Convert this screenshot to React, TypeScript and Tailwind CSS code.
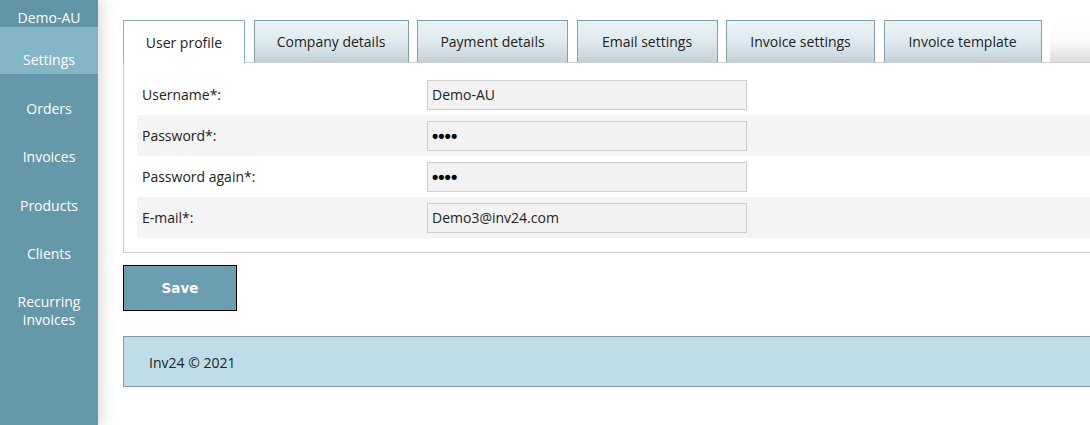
import React from "react";

const tabs = [
  { label: "User profile", w: "w-[122px]", active: true },
  { label: "Company details", w: "w-[155px]" },
  { label: "Payment details", w: "w-[151px]" },
  { label: "Email settings", w: "w-[141px]" },
  { label: "Invoice settings", w: "w-[149px]" },
  { label: "Invoice template", w: "w-[158px]" },
];

const rows = [
  { label: "Username*:", value: "Demo-AU", shade: false },
  { label: "Password*:", value: "••••", shade: true, pw: true },
  { label: "Password again*:", value: "••••", shade: false, pw: true },
  { label: "E-mail*:", value: "Demo3@inv24.com", shade: true },
];

const nav = ["Orders", "Invoices", "Products", "Clients"];

export default function App() {
  return (
    <div
      className="w-[1090px] h-[425px] flex bg-white overflow-hidden text-[#222]"
      style={{ fontFamily: '"Open Sans", "Noto Sans", sans-serif' }}
    >
      <aside className="w-[98px] shrink-0 bg-[#6599aa] text-white text-[14px] leading-[19px] text-center relative z-10 shadow-[5px_0_12px_rgba(0,0,0,0.13)]">
        <div className="h-[27px] bg-[#6194a5] pt-[8px]">Demo-AU</div>
        <div className="h-[47px] bg-[#84b6c7] pt-[23px]">Settings</div>
        <div className="flex flex-col pt-[10px]">
          {nav.map((n) => (
            <div key={n} className="h-[48.5px] flex items-center justify-center">
              {n}
            </div>
          ))}
          <div className="pt-[15px] leading-[18px]">
            Recurring
            <br />
            invoices
          </div>
        </div>
      </aside>

      <main className="flex-1 pl-[25px] pt-[20px] overflow-hidden">
        <div className="w-[1000px]">
          <div className="flex items-end gap-[8.5px] h-[42px] relative">
            {tabs.map((t) =>
              t.active ? (
                <div
                  key={t.label}
                  className={`${t.w} h-[43px] -mb-px relative z-10 bg-white border border-b-0 border-[#8fb0ba] flex items-center justify-center text-[14px]`}
                >
                  {t.label}
                </div>
              ) : (
                <div
                  key={t.label}
                  className={`${t.w} h-[42px] border border-b-0 border-[#7f9fa9] bg-gradient-to-b from-[#e9f3f7] via-[#dfeaef] to-[#c3d1d6] flex items-center justify-center text-[14px]`}
                >
                  {t.label}
                </div>
              )
            )}
            <div className="flex-1 h-[42px] bg-gradient-to-b from-white via-[#fafafa] to-[#dcdcdc]" />
          </div>

          <div className="border border-[#cfcfcf] bg-white pt-[11px] pb-[14px] pl-[13px]">
            {rows.map((r) => (
              <div
                key={r.label}
                className={`h-[41px] flex items-center ${r.shade ? "bg-[#f4f4f4]" : "bg-white"}`}
              >
                <div className="w-[290px] pl-[5px] text-[14px]">{r.label}</div>
                <div className="w-[320px] h-[30px] border border-[#cdcdcd] bg-[#f2f2f2] flex items-center px-[4px] text-[14px]">
                  {r.pw ? (
                    <span
                      className="text-[18px] font-bold leading-none text-black"
                      style={{ fontFamily: '"Liberation Sans", Arial, sans-serif' }}
                    >
                      ••••
                    </span>
                  ) : (
                    r.value
                  )}
                </div>
              </div>
            ))}
          </div>

          <button
            className="mt-[12px] w-[114px] h-[46px] bg-[#6a9eb0] border border-black text-white font-bold text-[13.5px] block"
            style={{ fontFamily: '"DejaVu Sans", Verdana, sans-serif' }}
          >
            Save
          </button>

          <div className="mt-[25px] h-[51px] bg-[#bfdde8] border border-[#7d9ca8] flex items-center pl-[25px] pt-[2px] text-[14px]">
            Inv24 © 2021
          </div>
        </div>
      </main>
    </div>
  );
}
